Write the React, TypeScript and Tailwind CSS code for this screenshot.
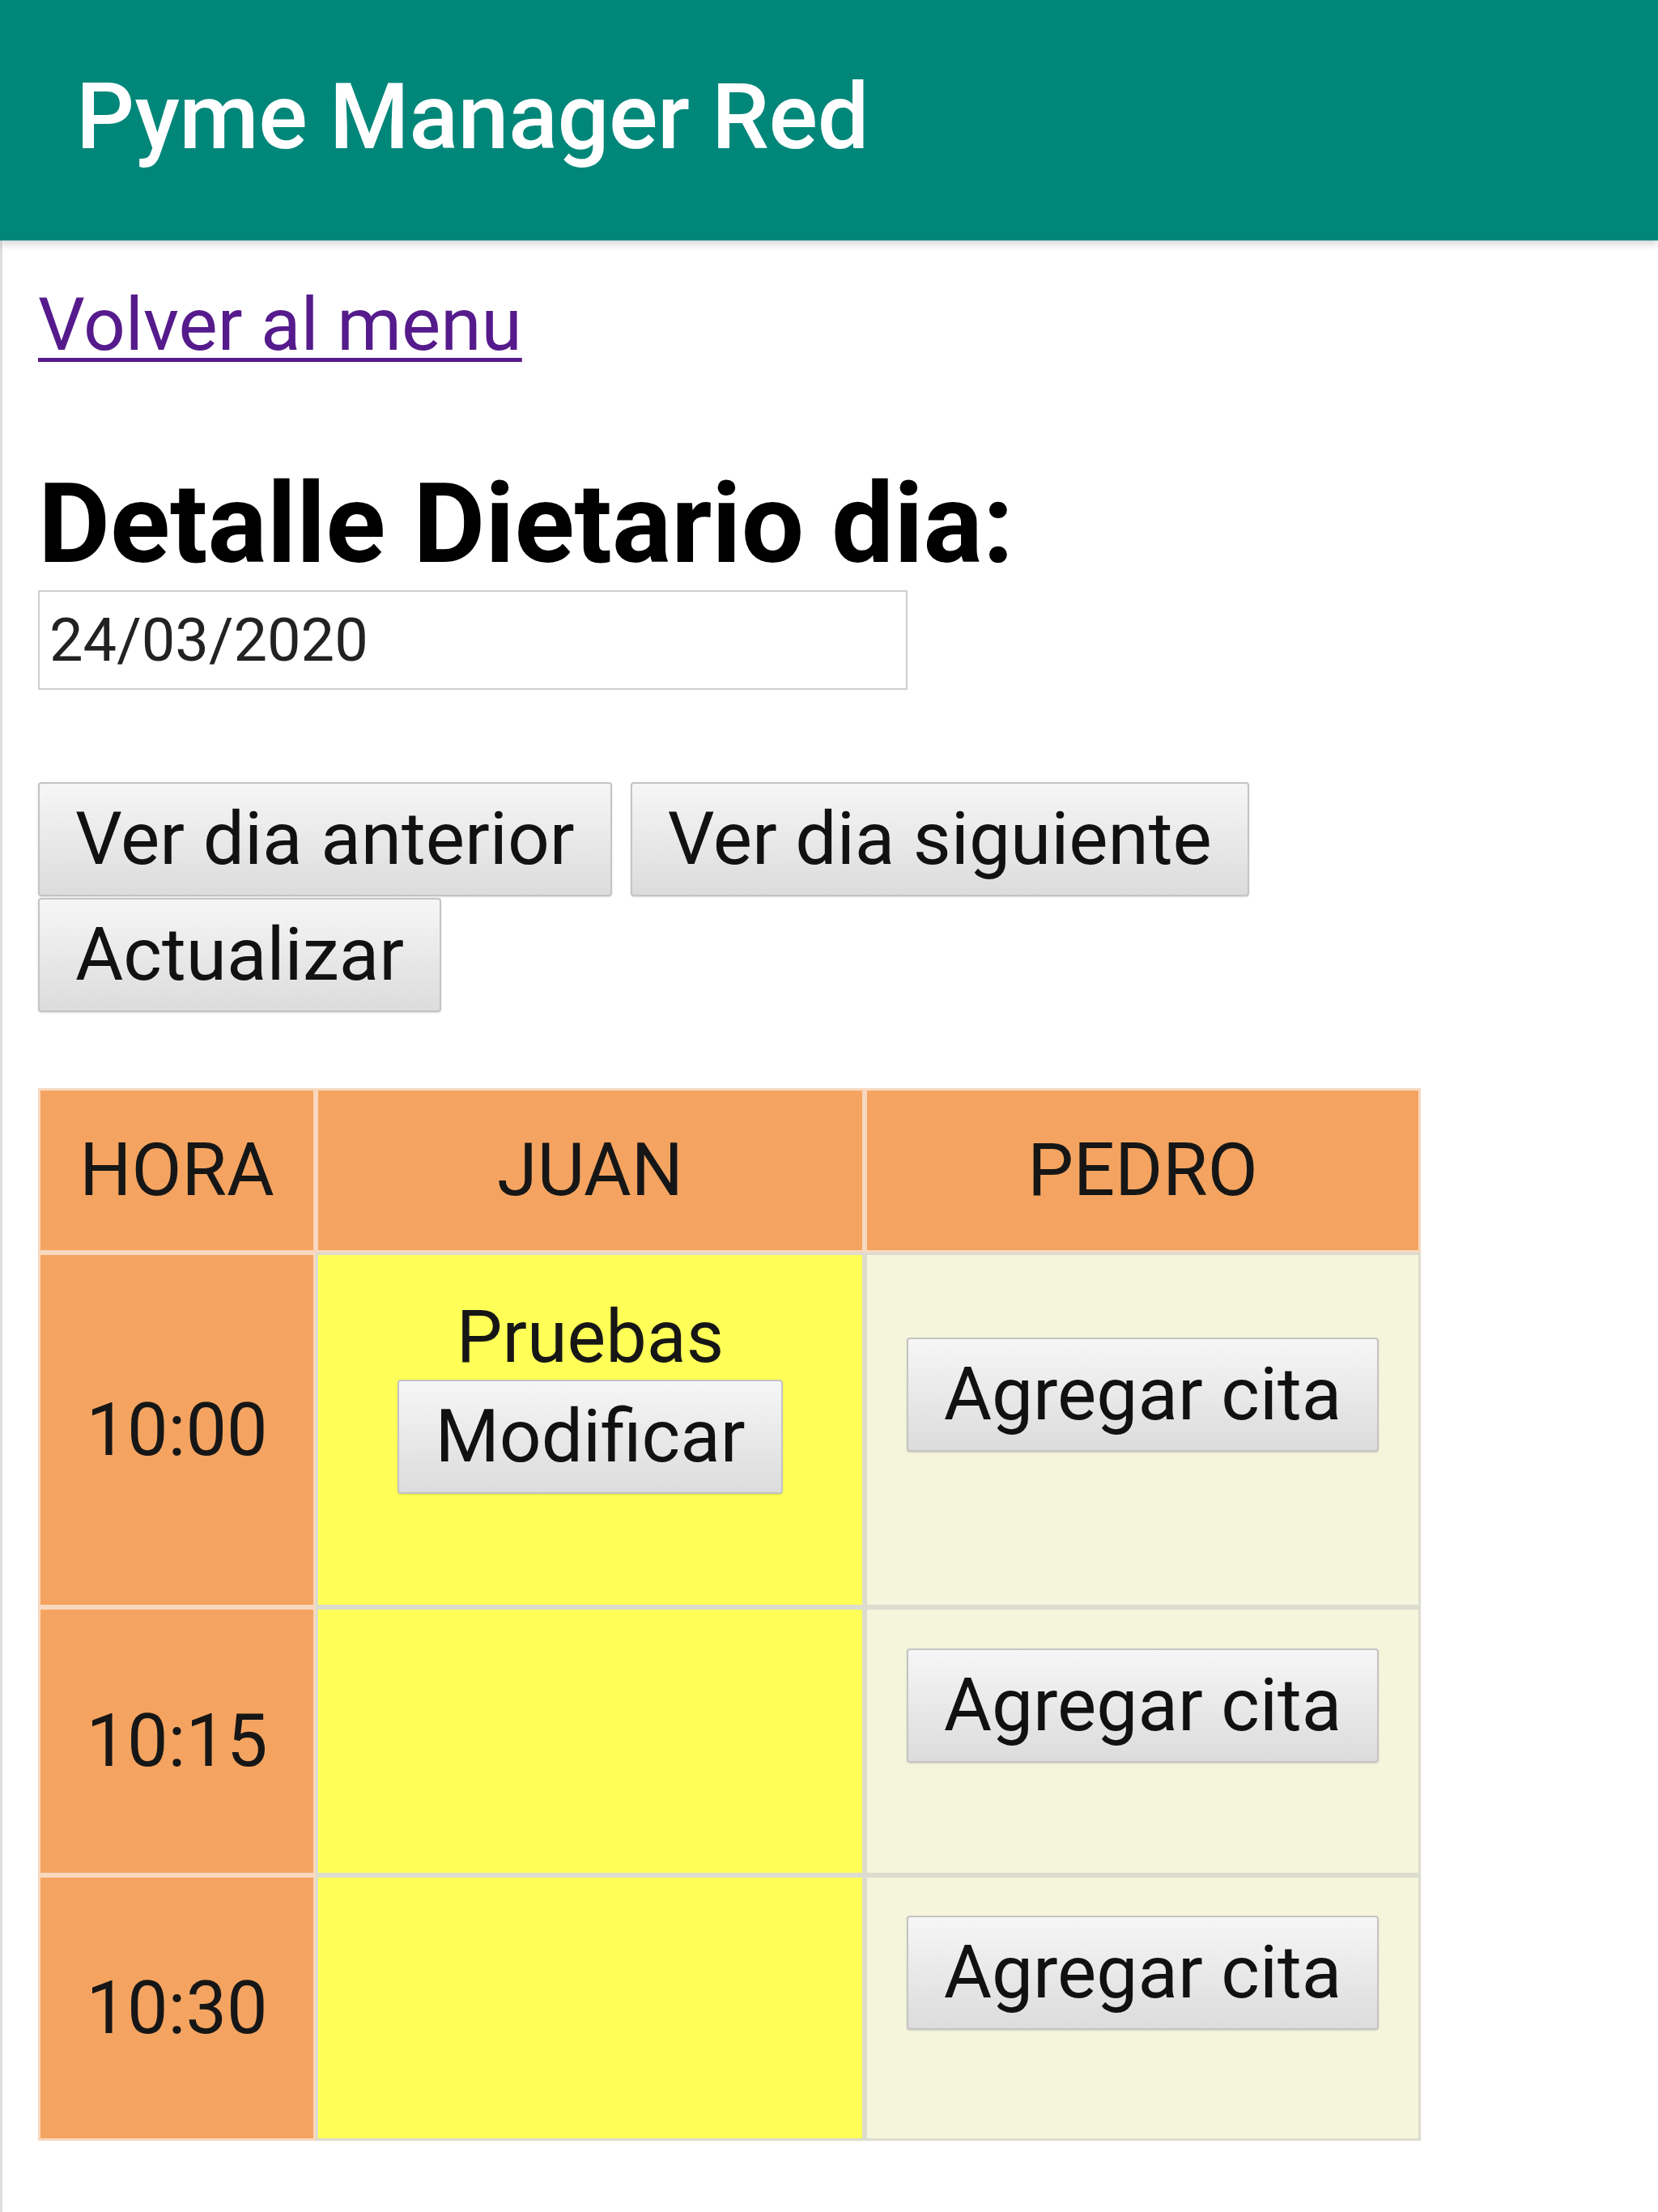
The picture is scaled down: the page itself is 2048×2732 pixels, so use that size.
import React from "react";

const btn =
  "h-[141px] px-[44px] border-2 border-[#c4c4c4] rounded-[4px] bg-gradient-to-b from-[#f6f6f6] to-[#dcdcdc] text-[91px] leading-none text-[#111] font-['Roboto',sans-serif] shadow-[0_1px_2px_rgba(0,0,0,0.15)]";

const rows = [
  { hora: "10:00", h: "h-[438px]", juan: true },
  { hora: "10:15", h: "h-[331px]", juan: false },
  { hora: "10:30", h: "h-[328px]", juan: false },
];

export default function App() {
  return (
    <div className="w-[2048px] min-h-[2732px] bg-white font-['Roboto',sans-serif] text-[#111]">
      {/* App bar */}
      <header className="relative z-10 h-[297px] bg-[#00877a] flex items-center pl-[94px] pb-[8px] shadow-[0_4px_10px_rgba(0,0,0,0.18)]">
        <h1 className="text-white text-[113px] font-medium leading-none tracking-[-0.5px]">
          Pyme Manager Red
        </h1>
      </header>

      <main className="border-l-[3px] border-[#dedede] pl-[44px] pr-[47px] pt-[52px] min-h-[2435px]">
        <a href="#" className="block w-fit text-[91px] leading-[105px] text-[#551a8b] underline decoration-[5px] underline-offset-[10px]">
          Volver al menu
        </a>

        <h2 className="mt-[113px] text-[137px] font-bold leading-[160px] text-black">
          Detalle Dietario dia:
        </h2>

        <div className="mt-[2px] w-[1074px] h-[123px] border-2 border-[#cfcfcf] flex items-center px-[12px] text-[74px] text-[#222]">
          24/03/2020
        </div>

        <div className="mt-[114px] flex flex-wrap gap-x-[23px] gap-y-[2px]">
          <button className={btn}>Ver dia anterior</button>
          <button className={btn}>Ver dia siguiente</button>
          <button className={btn}>Actualizar</button>
        </div>

        {/* Agenda table */}
        <div className="mt-[94px] grid grid-cols-[343px_678px_687px] w-fit text-[90px] text-[#161616]">
          {["HORA", "JUAN", "PEDRO"].map((t) => (
            <div
              key={t}
              className="h-[203px] bg-[#f4a460] border-[3px] border-[#f8d8be] flex items-center justify-center"
            >
              {t}
            </div>
          ))}

          {rows.map((r) => (
            <React.Fragment key={r.hora}>
              <div className={`${r.h} bg-[#f4a460] border-[3px] border-[#f8d8be] flex items-center justify-center`}>
                {r.hora}
              </div>
              <div className={`${r.h} bg-[#ffff57] border-[3px] border-[#dcdccf] flex flex-col items-center justify-center pb-[88px]`}>
                {r.juan && (
                  <>
                    <span className="leading-[105px]">Pruebas</span>
                    <button className={btn}>Modificar</button>
                  </>
                )}
              </div>
              <div className={`${r.h} bg-[#f5f5dc] border-[3px] border-[#dcdccf] flex flex-col items-center justify-center pb-[88px]`}>
                <button className={btn}>Agregar cita</button>
              </div>
            </React.Fragment>
          ))}
        </div>
      </main>
    </div>
  );
}
